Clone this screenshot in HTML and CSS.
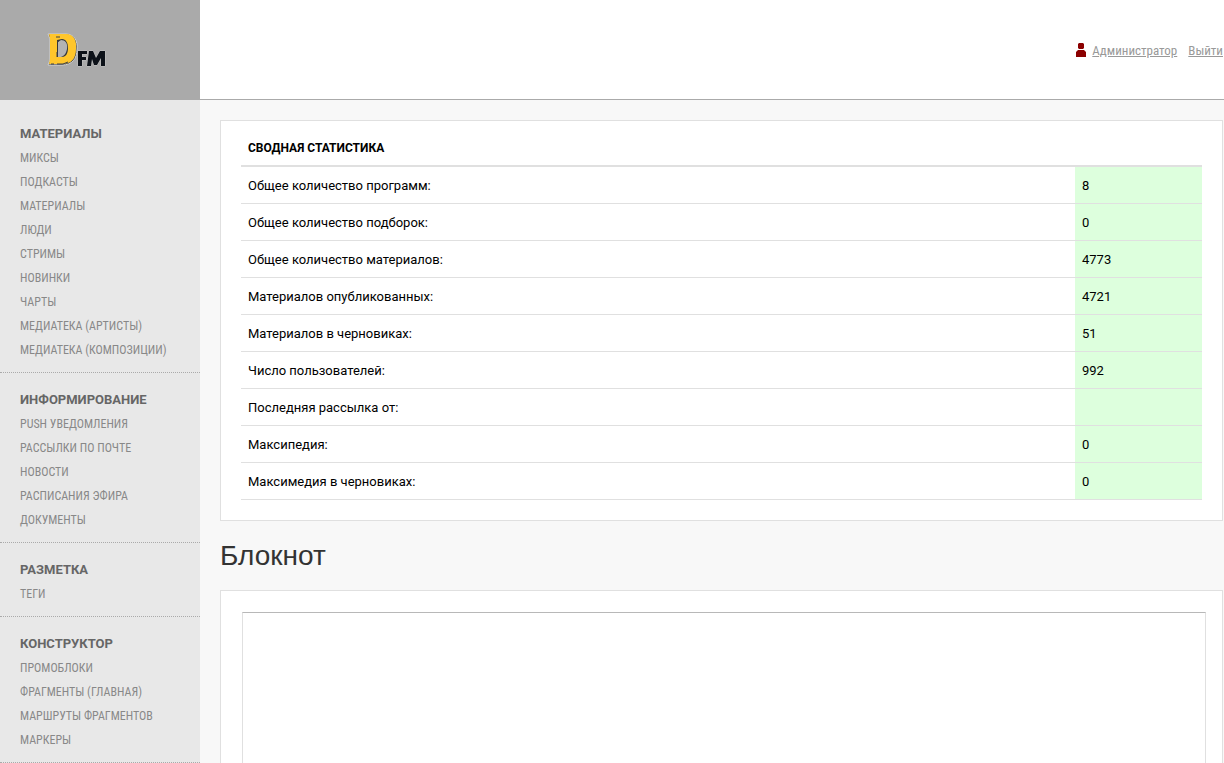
FILE: index.html
```html
<!DOCTYPE html>
<html lang="ru">
<head>
    <meta charset="UTF-8">
    <meta name="viewport" content="width=device-width, initial-scale=1.0">
    <title>DFM - Сводная статистика</title>
    <link rel="stylesheet" href="styles.css">
</head>
<body>
    <header class="header">
        <a class="logo" href="#" aria-label="DFM">
            <svg width="60" height="36" viewBox="0 0 60 36">
                <path d="M2 2H20C28 2 32 9 31 17C31 27 26 33 16 33H2L4 28V7Z" fill="#34373c" stroke="#d2d2d2"/>
                <path fill="#ffc62b" fill-rule="evenodd" d="M3 2H20C28 2 31 9 30 17C30 27 25 32 16 32H3L4 27V7Z M11 8V25H16C20 25 22 21 22 16C22 11 20 7 16 7Z"/>
                <path d="M12 10L15 8C19 8 22 11 21 17C20 22 18 24 15 25H12Z" fill="#b3b3b3"/>
                <path d="M11 25V20M12 10V9M5 32H8M11 32H17L22 30M10 5H14" fill="none" stroke="#3c4047"/>
                <g fill="#0d1219" stroke="#c4c4c4" stroke-width="1" paint-order="stroke">
                    <path d="M32 19H41V22H36V25H40V28H36V34H32Z"/>
                    <path d="M43 19H47L50 26L54 19H59V34H55V26L51 33H48L46 27L45 34H41Z"/>
                </g>
            </svg>
        </a>
        <div class="user-bar">
            <svg class="user-icon" width="10" height="14" viewBox="0 0 10 14">
                <path fill="#8b0000" d="M3 0H7L8 1V5L7 6H3L2 5V1Z M2 7H8L10 9V14H0V9Z"/>
            </svg>
            <a href="#">Администратор</a>
            <a class="logout" href="#">Выйти</a>
        </div>
    </header>

    <div class="page">
        <nav class="sidebar">
            <div class="menu-group">
                <h3>Материалы</h3>
                <ul>
                    <li><a href="#">Миксы</a></li>
                    <li><a href="#">Подкасты</a></li>
                    <li><a href="#">Материалы</a></li>
                    <li><a href="#">Люди</a></li>
                    <li><a href="#">Стримы</a></li>
                    <li><a href="#">Новинки</a></li>
                    <li><a href="#">Чарты</a></li>
                    <li><a href="#">Медиатека (артисты)</a></li>
                    <li><a href="#">Медиатека (композиции)</a></li>
                </ul>
            </div>
            <div class="menu-group">
                <h3>Информирование</h3>
                <ul>
                    <li><a href="#">Push уведомления</a></li>
                    <li><a href="#">Рассылки по почте</a></li>
                    <li><a href="#">Новости</a></li>
                    <li><a href="#">Расписания эфира</a></li>
                    <li><a href="#">Документы</a></li>
                </ul>
            </div>
            <div class="menu-group">
                <h3>Разметка</h3>
                <ul>
                    <li><a href="#">Теги</a></li>
                </ul>
            </div>
            <div class="menu-group">
                <h3>Конструктор</h3>
                <ul>
                    <li><a href="#">Промоблоки</a></li>
                    <li><a href="#">Фрагменты (главная)</a></li>
                    <li><a href="#">Маршруты фрагментов</a></li>
                    <li><a href="#">Маркеры</a></li>
                </ul>
            </div>
        </nav>

        <main class="content">
            <div class="panel">
                <table class="stats">
                    <thead>
                        <tr><th colspan="2">Сводная статистика</th></tr>
                    </thead>
                    <tbody>
                        <tr><td>Общее количество программ:</td><td class="value">8</td></tr>
                        <tr><td>Общее количество подборок:</td><td class="value">0</td></tr>
                        <tr><td>Общее количество материалов:</td><td class="value">4773</td></tr>
                        <tr><td>Материалов опубликованных:</td><td class="value">4721</td></tr>
                        <tr><td>Материалов в черновиках:</td><td class="value">51</td></tr>
                        <tr><td>Число пользователей:</td><td class="value">992</td></tr>
                        <tr><td>Последняя рассылка от:</td><td class="value"></td></tr>
                        <tr><td>Максипедия:</td><td class="value">0</td></tr>
                        <tr><td>Максимедия в черновиках:</td><td class="value">0</td></tr>
                    </tbody>
                </table>
            </div>

            <h1 id="notepad-title">Блокнот</h1>
            <div class="panel notepad">
                <textarea name="notepad" aria-labelledby="notepad-title"></textarea>
            </div>
        </main>
    </div>
</body>
</html>
```

FILE: styles.css
```css
* {
    box-sizing: border-box;
}
body {
    margin: 0;
    background-color: #f8f8f8;
    font-family: Roboto, Arial, sans-serif;
    font-size: 13px;
    color: #000;
}

/* Header */
.header {
    display: flex;
    justify-content: space-between;
    height: 100px;
    background: #fff;
    border-bottom: 1px solid #aaa;
}
.logo {
    width: 200px;
    height: 100px;
    padding: 32px 0 0 46px;
    background: #aaa;
}
.logo svg {
    display: block;
}
.user-bar {
    display: flex;
    align-items: center;
    padding: 1px 1px 0 0;
    font-family: "Roboto Condensed", Roboto, sans-serif;
    font-size: 13px;
}
.user-bar a {
    color: #999;
}
.user-icon {
    margin-right: 6px;
}
.user-bar .logout {
    margin-left: 11px;
}

/* Sidebar */
.page {
    display: flex;
    align-items: stretch;
}
.sidebar {
    flex: 0 0 200px;
    background: #e8e8e8;
    text-transform: uppercase;
}
.menu-group {
    padding: 15px 20px 10px;
    border-bottom: 1px dotted #aaa;
}
.menu-group:first-child {
    padding-top: 22px;
}
.menu-group h3 {
    margin: 0;
    font-size: 13px;
    line-height: 24px;
    color: #666;
}
.menu-group ul {
    margin: 0;
    padding: 0;
    list-style: none;
}
.menu-group li {
    line-height: 24px;
    white-space: nowrap;
}
.menu-group a {
    font-family: "Roboto Condensed", Roboto, sans-serif;
    font-size: 12px;
    color: #888;
    text-decoration: none;
}

/* Content */
.content {
    flex: 1;
    min-width: 0;
    padding: 20px 1px 20px 20px;
}
.panel {
    padding: 20px;
    background: #fff;
    border: 1px solid #e0e0e0;
}
.stats {
    width: 100%;
    border-collapse: collapse;
}
.stats th {
    height: 25px;
    padding: 1px 7px 11px;
    border-bottom: 2px solid #e0e0e0;
    font-size: 12px;
    line-height: 12px;
    text-align: left;
    text-transform: uppercase;
}
.stats td {
    height: 37px;
    padding: 2px 7px 0;
    border-bottom: 1px solid #e0e0e0;
}
.stats .value {
    width: 127px;
    background: #dfd;
}
h1 {
    margin: 20px 0 19px;
    font-family: "Liberation Sans", Arial, sans-serif;
    font-size: 28px;
    font-weight: normal;
    line-height: 30px;
    color: #333;
}
.notepad textarea {
    display: block;
    width: calc(100% + 3px);
    height: 300px;
    margin: 1px;
    border: 1px solid #e0e0e0;
    border-top-color: #b8b8b8;
    background: #fff;
    resize: none;
}
```
